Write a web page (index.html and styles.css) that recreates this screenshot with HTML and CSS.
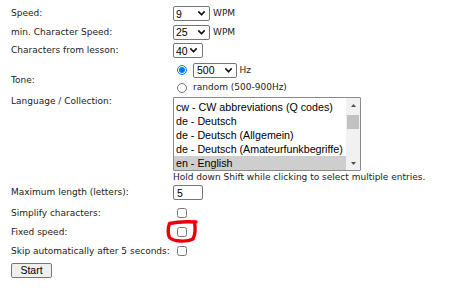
FILE: index.html
```html
<!DOCTYPE html>
<html>
<head>
<meta charset="utf-8">
<link rel="stylesheet" href="styles.css">
</head>
<body>
<div class="form">
  <div class="row row-sel">
    <div class="label">Speed:</div>
    <div class="ctrl">
      <span class="sel sel-37"><span class="val">9</span><svg class="chev" width="7" height="5" viewBox="0 0 7 5"><polyline points="0.8,0.9 3.5,3.8 6.2,0.9"/></svg></span>
      <span class="unit">WPM</span>
    </div>
  </div>
  <div class="row row-sel">
    <div class="label">min. Character Speed:</div>
    <div class="ctrl">
      <span class="sel sel-37"><span class="val">25</span><svg class="chev" width="7" height="5" viewBox="0 0 7 5"><polyline points="0.8,0.9 3.5,3.8 6.2,0.9"/></svg></span>
      <span class="unit">WPM</span>
    </div>
  </div>
  <div class="row row-sel">
    <div class="label">Characters from lesson:</div>
    <div class="ctrl">
      <span class="sel sel-30"><span class="val">40</span><svg class="chev" width="7" height="5" viewBox="0 0 7 5"><polyline points="0.8,0.9 3.5,3.8 6.2,0.9"/></svg></span>
    </div>
  </div>
  <div class="row row-tone">
    <div class="label label-tone">Tone:</div>
    <div class="tone">
      <div class="tone-line tone-line-1">
        <input class="radio" type="radio" name="tone" checked>
        <span class="sel sel-44"><span class="val">500</span><svg class="chev" width="7" height="5" viewBox="0 0 7 5"><polyline points="0.8,0.9 3.5,3.8 6.2,0.9"/></svg></span>
        <span class="unit-hz">Hz</span>
      </div>
      <div class="tone-line tone-line-2">
        <input class="radio" type="radio" name="tone">
        <span>random (500-900Hz)</span>
      </div>
    </div>
  </div>
  <div class="row row-lang">
    <div class="label label-lang">Language / Collection:</div>
    <div class="lang">
      <div class="listbox">
        <div class="options">
          <div class="opt">cw - CW abbreviations (Q codes)</div>
          <div class="opt">de - Deutsch</div>
          <div class="opt">de - Deutsch (Allgemein)</div>
          <div class="opt">de - Deutsch (Amateurfunkbegriffe)</div>
          <div class="opt opt-sel">en - English</div>
        </div>
        <div class="scrollbar">
          <div class="sb-btn"><svg width="5" height="3" viewBox="0 0 5 3"><polygon points="0,3 2.5,0 5,3"/></svg></div>
          <div class="sb-track"><div class="sb-thumb"></div></div>
          <div class="sb-btn"><svg width="5" height="3" viewBox="0 0 5 3"><polygon points="0,0 2.5,3 5,0"/></svg></div>
        </div>
      </div>
      <div class="hint">Hold down Shift while clicking to select multiple entries.</div>
    </div>
  </div>
  <div class="row row-max">
    <div class="label">Maximum length (letters):</div>
    <div class="ctrl"><input class="input" type="text" value="5"></div>
  </div>
  <div class="row row-check row-check-first">
    <div class="label">Simplify characters:</div>
    <div class="ctrl"><input class="cb" type="checkbox"></div>
  </div>
  <div class="row row-check">
    <div class="label">Fixed speed:</div>
    <div class="ctrl"><input class="cb" type="checkbox"></div>
  </div>
  <div class="row row-check">
    <div class="label">Skip automatically after 5 seconds:</div>
    <div class="ctrl"><input class="cb" type="checkbox"></div>
  </div>
  <div class="row-btn">
    <button class="btn" type="button">Start</button>
  </div>
</div>
<svg class="annot" width="458" height="290" viewBox="0 0 458 290">
  <path d="M 196 222 C 188 221.5, 176 222, 169.5 223.5 C 168 228, 168 234, 169.5 237.5 C 173 241.5, 186 242.5, 193 239 C 195 235, 195.5 228, 194.5 222.5"/>
</svg>
</body>
</html>
```

FILE: styles.css
```css
html, body {
  margin: 0;
  padding: 0;
  background: #fff;
}
body {
  position: relative;
  width: 458px;
  height: 290px;
  overflow: hidden;
}
.form {
  display: flex;
  flex-direction: column;
  gap: 3.5px;
  padding: 6px 0 0 11px;
  font-family: "DejaVu Sans", Verdana, sans-serif;
  font-size: 9px;
  line-height: 11px;
  color: #222;
}
.row {
  display: grid;
  grid-template-columns: 162px auto;
  align-items: center;
}
.label {
  white-space: nowrap;
}
.row-sel { height: 15px; }
.row-tone { height: 32px; }
.row-lang { align-items: start; }
.row-max { height: 15px; margin-top: -1.5px; }
.row-check { height: 15.5px; }
.row-check-first { margin-top: 2px; }

.ctrl {
  display: flex;
  align-items: center;
  gap: 3px;
}
.sel {
  box-sizing: border-box;
  display: inline-flex;
  align-items: center;
  height: 15px;
  border: 1px solid #767676;
  border-radius: 2px;
  padding: 0 4px 0 2px;
  background: #fff;
  font-family: "Liberation Sans", Arial, sans-serif;
  font-size: 10.5px;
  line-height: 12px;
  color: #000;
}
.sel .val { flex: 1; }
.sel-37 { width: 37px; }
.sel-30 { width: 30px; padding-right: 5px; }
.sel-44 { width: 44px; padding-left: 3px; }
.chev polyline {
  fill: none;
  stroke: #111;
  stroke-width: 1.6;
  stroke-linecap: round;
  stroke-linejoin: round;
}
.label-tone { padding-top: 5px; }
.tone {
  display: flex;
  flex-direction: column;
  gap: 4px;
  padding-top: 1px;
}
.tone-line {
  display: flex;
  align-items: center;
  white-space: nowrap;
}
.tone-line-1 { height: 15px; }
.tone-line-2 { height: 12px; }
.radio {
  width: 10px;
  height: 10px;
  margin: 0 6px 0 4px;
}
.unit-hz { margin-left: 2.5px; }

.label-lang { margin-top: -1px; }
.lang {
  display: flex;
  flex-direction: column;
}
.listbox {
  box-sizing: border-box;
  display: flex;
  width: 188px;
  height: 74px;
  border: 1px solid #8a8a8a;
  border-radius: 1px;
  background: #fff;
}
.options {
  flex: 1;
  padding-top: 2px;
  font-family: "Liberation Sans", Arial, sans-serif;
  font-size: 10.7px;
  color: #000;
  overflow: hidden;
}
.opt {
  height: 14px;
  line-height: 14px;
  padding-left: 2px;
  white-space: nowrap;
}
.opt-sel { background: #cecece; }
.scrollbar {
  width: 14px;
  display: flex;
  flex-direction: column;
  background: #f1f1f1;
}
.sb-btn {
  height: 14px;
  display: flex;
  align-items: center;
  justify-content: center;
}
.sb-btn polygon { fill: #505050; }
.sb-track {
  flex: 1;
  padding: 3px 1px 0;
}
.sb-thumb {
  height: 14px;
  background: #c1c1c1;
}
.hint {
  margin-top: 1px;
  white-space: nowrap;
}
.input {
  box-sizing: border-box;
  width: 30px;
  height: 15px;
  margin: 0;
  padding: 0 0 0 3px;
  border: 1px solid #767676;
  border-radius: 2px;
  font-family: "Liberation Sans", Arial, sans-serif;
  font-size: 10.5px;
  color: #000;
  outline: none;
}
.cb {
  width: 10px;
  height: 10px;
  margin: 0 0 0 3.5px;
}
.row-btn {
  display: flex;
}
.btn {
  box-sizing: border-box;
  width: 41px;
  height: 15px;
  padding: 0;
  border: 1px solid #767676;
  border-radius: 2px;
  background: #efefef;
  font-family: "Liberation Sans", Arial, sans-serif;
  font-size: 10.5px;
  line-height: 12px;
  color: #000;
}
.annot {
  position: absolute;
  left: 0;
  top: 0;
  pointer-events: none;
}
.annot path {
  fill: none;
  stroke: #e8000c;
  stroke-width: 3.4;
  stroke-linecap: round;
  stroke-linejoin: round;
}
```
